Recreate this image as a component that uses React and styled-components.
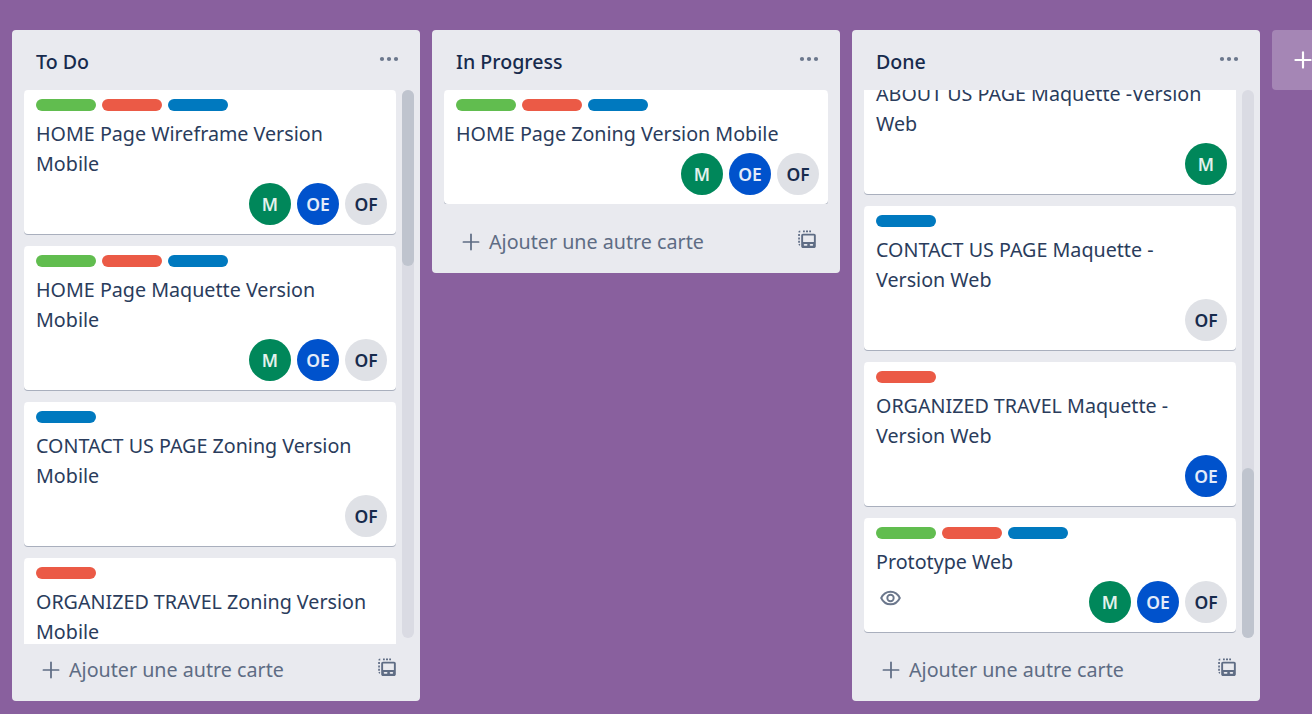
import React from 'react';
import styled, { createGlobalStyle } from 'styled-components';
import { Plus } from 'lucide-react';

const GlobalStyle = createGlobalStyle`
  html, body { margin: 0; height: 100%; overflow: hidden; }
  body { background: #89609e; font-family: "Noto Sans", "Open Sans", Arial, sans-serif; }
`;

const Board = styled.div`
  display: flex;
  align-items: flex-start;
  gap: 12px;
  width: 1312px;
  height: 714px;
  box-sizing: border-box;
  padding: 30px 0 13px 12px;
  overflow: hidden;
`;

const List = styled.section`
  flex: 0 0 408px;
  display: flex;
  flex-direction: column;
  background: #e9eaef;
  border-radius: 4px;
`;

const ListHeader = styled.header`
  height: 60px;
  box-sizing: border-box;
  padding: 2px 21px 0 24px;
  display: flex;
  align-items: center;
  justify-content: space-between;
  color: #172b4d;
  font-size: 19.6px;
  font-weight: 500;
`;

const DotsIcon = styled.svg`
  margin-bottom: 4px;
  fill: #6b778c;
`;

const ScrollRow = styled.div`
  display: flex;
  height: ${(p) => (p.$scrolls ? '554px' : 'auto')};
`;

const Cards = styled.div`
  flex: 1;
  min-width: 0;
  display: flex;
  flex-direction: column;
  justify-content: ${(p) => (p.$end ? 'flex-end' : 'flex-start')};
  gap: 12px;
  padding: ${(p) => (p.$end ? '0 0 12px 12px' : '0 0 0 12px')};
  overflow: hidden;
  ${(p) => !p.$scrolls && 'padding-right: 12px;'}
`;

const Track = styled.div`
  flex: 0 0 12px;
  height: 548px;
  margin: 0 6px;
  background: #dadbe3;
  border-radius: 6px;
`;

const Thumb = styled.div`
  margin-top: ${(p) => p.$top}px;
  height: ${(p) => p.$height}px;
  background: #bfc4ce;
  border-radius: 6px;
`;

const Card = styled.article`
  flex: 0 0 auto;
  box-sizing: border-box;
  background: #fff;
  border-radius: 4px;
  box-shadow: 0 1px 0 #a9afbd;
  padding: 9px 9px 9px 12px;
`;

const Labels = styled.div`
  display: flex;
  gap: 6px;
  height: 12px;
`;

const Label = styled.span`
  width: 60px;
  height: 12px;
  border-radius: 6px;
  background: ${(p) => p.$color};
`;

const Title = styled.div`
  margin-top: 8px;
  padding-right: 9px;
  color: #2a3c5c;
  font-size: 19.7px;
  line-height: 30px;
`;

const CardFoot = styled.div`
  display: flex;
  align-items: flex-start;
  justify-content: space-between;
  margin-top: 4px;
`;

const Badge = styled.span`
  display: block;
  padding: 9px 0 0 4px;
  color: #6b778c;
  line-height: 0;
`;

const Avatars = styled.div`
  display: flex;
  gap: 6px;
  margin-left: auto;
`;

const Avatar = styled.span`
  width: 42px;
  height: 42px;
  border-radius: 50%;
  display: flex;
  align-items: center;
  justify-content: center;
  font-size: 17.5px;
  font-weight: 600;
  background: ${(p) => p.$bg};
  color: ${(p) => p.$fg};
`;

const ListFoot = styled.footer`
  height: 57px;
  box-sizing: border-box;
  margin-top: ${(p) => (p.$gap ? '12px' : '0')};
  display: flex;
  align-items: center;
  padding: 0 23px 6px 26px;
  color: #5e6c84;
  font-size: 19.7px;
`;

const AddLabel = styled.span`
  margin-left: 5px;
  flex: 1;
`;

const TemplateSvg = styled.svg`
  margin-bottom: 5px;
  fill: #5e6c84;
`;

const AddList = styled.button`
  flex: 0 0 120px;
  height: 60px;
  border: 0;
  border-radius: 4px;
  background: rgba(255, 255, 255, 0.24);
  color: #fff;
  display: flex;
  align-items: center;
  padding: 0 0 0 18px;
`;

const Dots = () => (
  <DotsIcon width="20" height="6" viewBox="0 0 20 6">
    <circle cx="3" cy="3" r="2.1" />
    <circle cx="10" cy="3" r="2.1" />
    <circle cx="17" cy="3" r="2.1" />
  </DotsIcon>
);

const TemplateIcon = () => (
  <TemplateSvg width="20" height="20" viewBox="0 0 20 20">
    <path d="M6 1.500h1.800v1.700H6zM9 1.500h2v1.700H9zM12.200 1.500H14v1.700h-1.800zM3.200 1.600C2.200 1.700 1.500 2.300 1.300 3.300l1.600.3c.1-.2.2-.3.4-.4zM1.200 5h1.700v2H1.200zM1.200 8.400h1.700v2H1.200zM1.200 11.800h1.700v2H1.200zM1.400 15.200c.2.700.7 1.200 1.400 1.500l.4-1.500-.2-.4z" />
    <path fillRule="evenodd" d="M6 4.800h11c1 0 1.800.8 1.800 1.800v10.600c0 1-.8 1.800-1.800 1.800H6c-1 0-1.800-.8-1.800-1.800V6.600c0-1 .8-1.800 1.800-1.800zm.1 1.800v6.400h10.800V6.600zm1.500 8.300a.9.9 0 0 0 0 1.800h2a.9.9 0 0 0 0-1.800zm6 0a.9.9 0 0 0 0 1.800h1.700a.9.9 0 0 0 0-1.800z" />
  </TemplateSvg>
);

const EyeIcon = () => (
  <svg width="21" height="16" viewBox="0 0 21 16" fill="none" stroke="currentColor" strokeWidth="1.900">
    <path d="M1.200 8C3.200 3.800 6.500 1.700 10.500 1.700S17.800 3.800 19.800 8c-2 4.200-5.300 6.300-9.300 6.300S3.200 12.200 1.200 8z" />
    <circle cx="10.500" cy="8" r="3.200" />
  </svg>
);

const GREEN = '#61bd4f';
const RED = '#eb5a46';
const BLUE = '#0079bf';
const M = ['M', '#00875a', '#e4f2ed'];
const OE = ['OE', '#0052cc', '#e4ecf9'];
const OF = ['OF', '#dfe1e6', '#172b4d'];

const TaskCard = ({ labels, title, people, watched }) => (
  <Card>
    <Labels>
      {labels.map((c) => (
        <Label key={c} $color={c} />
      ))}
    </Labels>
    <Title>{title}</Title>
    <CardFoot>
      {watched && (
        <Badge>
          <EyeIcon />
        </Badge>
      )}
      <Avatars>
        {people.map(([name, bg, fg]) => (
          <Avatar key={name} $bg={bg} $fg={fg}>
            {name}
          </Avatar>
        ))}
      </Avatars>
    </CardFoot>
  </Card>
);

const Column = ({ name, cards, thumb, end }) => (
  <List>
    <ListHeader>
      {name}
      <Dots />
    </ListHeader>
    <ScrollRow $scrolls={!!thumb}>
      <Cards $end={end} $scrolls={!!thumb}>
        {cards.map((c) => (
          <TaskCard key={c.title} {...c} />
        ))}
      </Cards>
      {thumb && (
        <Track>
          <Thumb $top={thumb[0]} $height={thumb[1]} />
        </Track>
      )}
    </ScrollRow>
    <ListFoot $gap={!thumb}>
      <Plus size={26} strokeWidth={1.600} />
      <AddLabel>Ajouter une autre carte</AddLabel>
      <TemplateIcon />
    </ListFoot>
  </List>
);

const todo = [
  { labels: [GREEN, RED, BLUE], title: 'HOME Page Wireframe Version Mobile', people: [M, OE, OF] },
  { labels: [GREEN, RED, BLUE], title: 'HOME Page Maquette Version Mobile', people: [M, OE, OF] },
  { labels: [BLUE], title: 'CONTACT US PAGE Zoning Version Mobile', people: [OF] },
  { labels: [RED], title: 'ORGANIZED TRAVEL Zoning Version Mobile', people: [OE] },
];

const progress = [
  { labels: [GREEN, RED, BLUE], title: 'HOME Page Zoning Version Mobile', people: [M, OE, OF] },
];

const done = [
  { labels: [GREEN], title: 'ABOUT US PAGE Maquette -Version Web', people: [M] },
  { labels: [BLUE], title: 'CONTACT US PAGE Maquette - Version Web', people: [OF] },
  { labels: [RED], title: 'ORGANIZED TRAVEL Maquette - Version Web', people: [OE] },
  { labels: [GREEN, RED, BLUE], title: 'Prototype Web', people: [M, OE, OF], watched: true },
];

export default function App() {
  return (
    <>
      <GlobalStyle />
      <Board>
        <Column name="To Do" cards={todo} thumb={[0, 176]} />
        <Column name="In Progress" cards={progress} />
        <Column name="Done" cards={done} thumb={[378, 170]} end />
        <AddList aria-label="Ajouter une liste">
          <Plus size={26} strokeWidth={2} />
        </AddList>
      </Board>
    </>
  );
}
